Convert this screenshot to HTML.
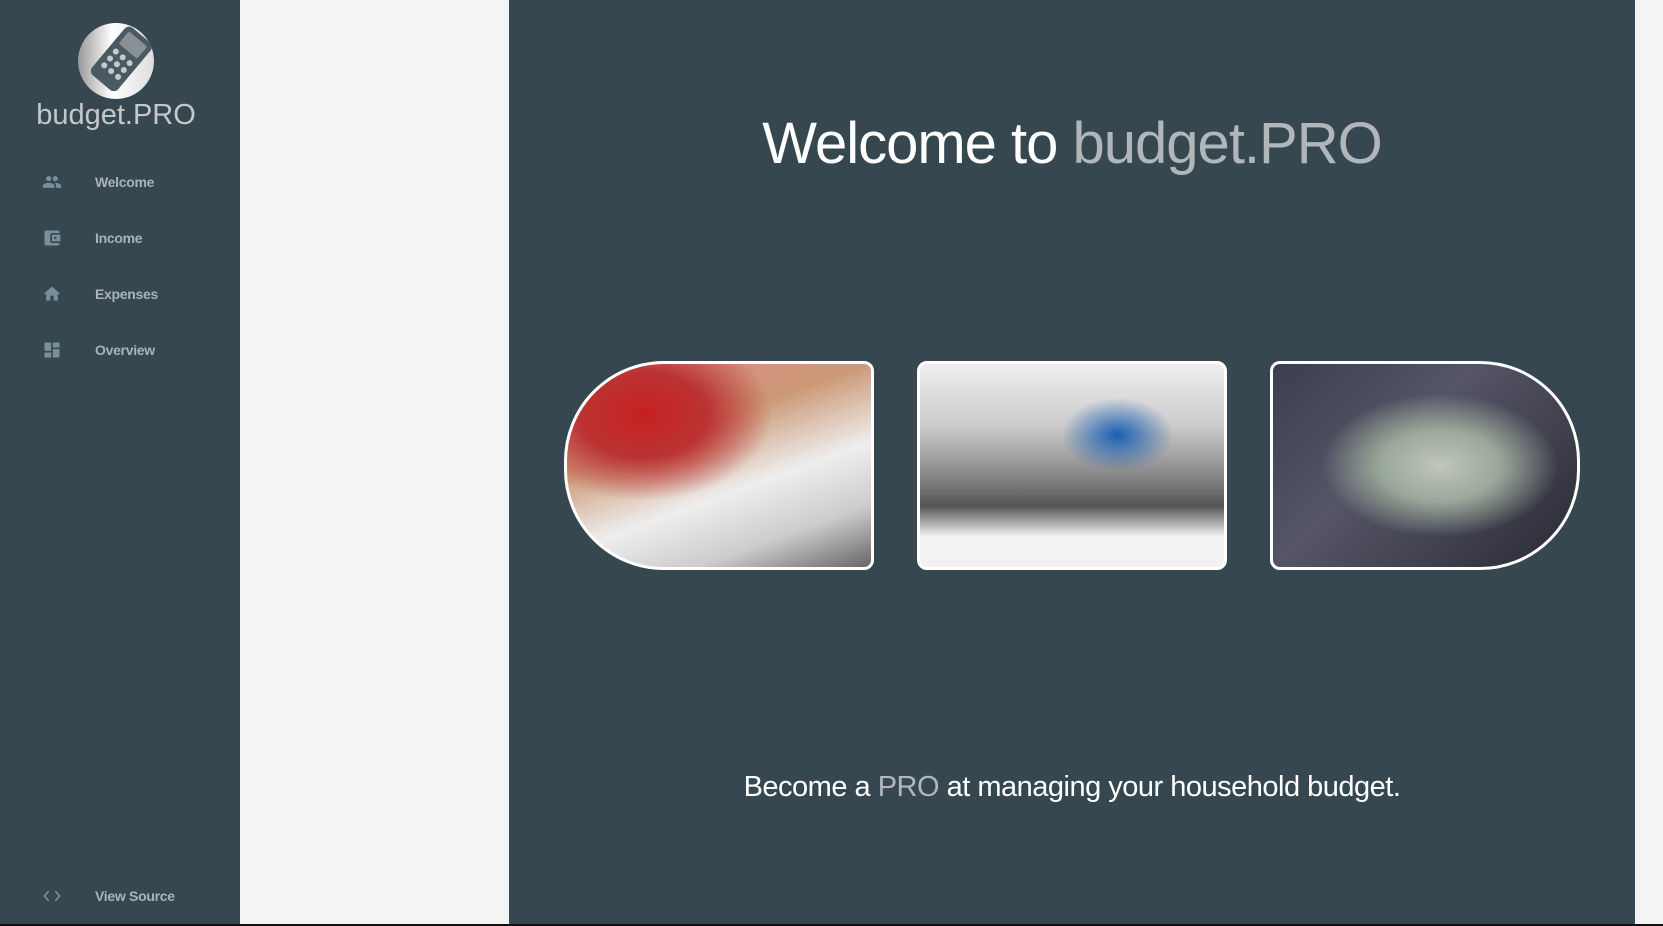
<!DOCTYPE html>
<html><head><meta charset="utf-8"><style>
body{margin:0;width:1663px;height:926px;overflow:hidden;background:#f4f4f4;font-family:"Liberation Sans",sans-serif;position:relative}
#side{position:absolute;left:0;top:0;width:240px;height:924px;background:#37474f}
#panel{position:absolute;left:240px;top:0;width:269px;height:924px;background:#f4f4f4}
#main{position:absolute;left:509px;top:0;width:1126px;height:924px;background:#37474f}
#bot{position:absolute;left:0;top:924px;width:1663px;height:2px;background:#111}
.logo{position:absolute;left:78px;top:23px;width:76px;height:76px;border-radius:50%;background:linear-gradient(90deg,#999,#fff 45%,#ddd);overflow:hidden}
.brand{position:absolute;left:0;width:232px;text-align:center;top:99px;font-size:29px;color:#c4c8ca;font-weight:300}
.nav{position:absolute;left:95px;font-size:14px;font-weight:bold;color:#a9b3b8;letter-spacing:-0.3px}
.ic{position:absolute;left:41px;width:22px;height:20px}
h1{position:absolute;left:509px;width:1126px;top:110px;margin:0;text-align:center;font-size:58px;font-weight:normal;color:#fff;letter-spacing:-1px}
.g{color:#b0b6b9}
.img{position:absolute;top:361px;width:304px;height:203px;border:3px solid #fff;box-sizing:content-box}
.tag{position:absolute;left:509px;width:1126px;top:771px;text-align:center;font-size:29px;color:#fff;letter-spacing:-0.5px}
</style></head><body>
<div id="side">
<div class="logo"><svg width="76" height="76" viewBox="0 0 76 76"><g transform="rotate(40 42 36)"><rect x="26" y="4" width="34" height="62" rx="6" fill="#4a5a62"/><rect x="31" y="9" width="24" height="16" rx="2" fill="#c8c8c8" opacity=".5"/><g fill="#c8c8c8"><circle cx="34" cy="33" r="3"/><circle cx="43" cy="33" r="3"/><circle cx="52" cy="33" r="3"/><circle cx="34" cy="42" r="3"/><circle cx="43" cy="42" r="3"/><circle cx="52" cy="42" r="3"/><circle cx="34" cy="51" r="3"/><circle cx="43" cy="51" r="3"/><circle cx="52" cy="51" r="3"/></g></g></svg></div>
<div class="brand">budget.PRO</div>
<svg class="ic" style="top:172px" viewBox="0 0 24 24" fill="#78909c"><path d="M16 11c1.7 0 3-1.3 3-3s-1.3-3-3-3-3 1.3-3 3 1.3 3 3 3zm-8 0c1.7 0 3-1.3 3-3S9.7 5 8 5 5 6.3 5 8s1.3 3 3 3zm0 2c-2.3 0-7 1.2-7 3.5V19h14v-2.5C15 14.2 10.3 13 8 13zm8 0c-.3 0-.6 0-1 .1 1.2.8 2 2 2 3.4V19h6v-2.5c0-2.3-4.7-3.5-7-3.5z"/></svg>
<div class="nav" style="top:174px">Welcome</div>
<svg class="ic" style="top:228px" viewBox="0 0 24 24" fill="#78909c"><path d="M21 18v1c0 1.1-.9 2-2 2H5c-1.1 0-2-.9-2-2V5c0-1.1.9-2 2-2h14c1.1 0 2 .9 2 2v1h-9c-1.1 0-2 .9-2 2v8c0 1.1.9 2 2 2h9zm-9-2h10V8H12v8zm4-2.5c-.8 0-1.5-.7-1.5-1.5s.7-1.5 1.5-1.5 1.5.7 1.5 1.5-.7 1.5-1.5 1.5z"/></svg>
<div class="nav" style="top:230px">Income</div>
<svg class="ic" style="top:284px" viewBox="0 0 24 24" fill="#78909c"><path d="M10 20v-6h4v6h5v-8h3L12 3 2 12h3v8z"/></svg>
<div class="nav" style="top:286px">Expenses</div>
<svg class="ic" style="top:340px" viewBox="0 0 24 24" fill="#78909c"><path d="M3 13h8V3H3v10zm0 8h8v-6H3v6zm10 0h8V11h-8v10zm0-18v6h8V3h-8z"/></svg>
<div class="nav" style="top:342px">Overview</div>
<svg class="ic" style="top:886px" viewBox="0 0 24 24" fill="none" stroke="#78909c" stroke-width="2"><path d="M8 6l-5 6 5 6M16 6l5 6-5 6"/></svg>
<div class="nav" style="top:888px">View Source</div>
</div>
<div id="panel"></div>
<div id="main"></div>
<h1>Welcome to <span class="g">budget.PRO</span></h1>
<div class="img" style="left:564px;border-radius:100px 10px 10px 100px;background:radial-gradient(ellipse at 25% 25%,#c62020 0,#b33 20%,transparent 40%),linear-gradient(160deg,#d88 0,#c97 35%,#eee 60%,#ccc 80%,#666 100%)"></div>
<div class="img" style="left:917px;border-radius:10px;background:radial-gradient(ellipse at 65% 35%,#1a5fb4 0,transparent 20%),linear-gradient(180deg,#eee 0,#ccc 30%,#888 55%,#555 70%,#f2f2f2 85%)"></div>
<div class="img" style="left:1270px;border-radius:10px 100px 100px 10px;background:radial-gradient(ellipse at 55% 50%,#bfc7b8 0,#9aa89a 25%,transparent 50%),linear-gradient(135deg,#3a3f4e 0,#556 40%,#2a2a35 100%)"></div>
<div class="tag">Become a <span class="g">PRO</span> at managing your household budget.</div>
<div id="bot"></div>
</body></html>
